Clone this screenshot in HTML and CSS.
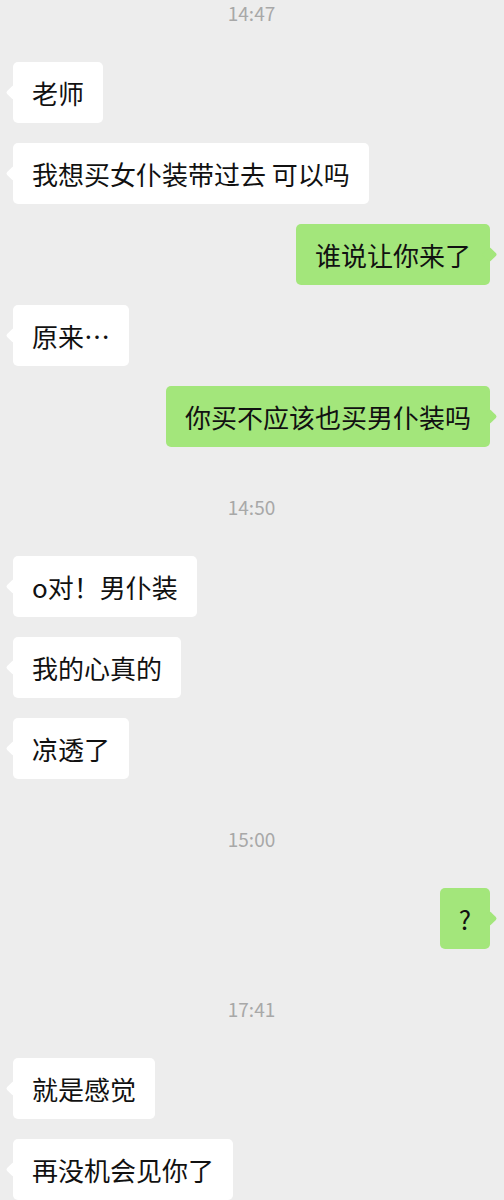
FILE: index.html
```html
<!DOCTYPE html>
<html lang="zh-CN">
<head>
    <meta charset="UTF-8">
    <meta name="viewport" content="width=device-width, initial-scale=1.0">
    <title>聊天记录</title>
    <link rel="stylesheet" href="styles.css">
</head>
<body>
    <div class="chat">
        <div class="time">14:47</div>
        <div class="row left"><p class="bubble">老师</p></div>
        <div class="row left"><p class="bubble">我想买女仆装带过去 可以吗</p></div>
        <div class="row right"><p class="bubble">谁说让你来了</p></div>
        <div class="row left"><p class="bubble">原来…</p></div>
        <div class="row right"><p class="bubble">你买不应该也买男仆装吗</p></div>

        <div class="time">14:50</div>
        <div class="row left"><p class="bubble">o对！男仆装</p></div>
        <div class="row left"><p class="bubble">我的心真的</p></div>
        <div class="row left"><p class="bubble">凉透了</p></div>

        <div class="time">15:00</div>
        <div class="row right"><p class="bubble">?</p></div>

        <div class="time">17:41</div>
        <div class="row left"><p class="bubble">就是感觉</p></div>
        <div class="row left"><p class="bubble">再没机会见你了</p></div>
    </div>
</body>
</html>
```

FILE: styles.css
```css
body {
    margin: 0;
    padding: 0;
    background-color: #ededed;
    font-family: "Noto Sans CJK SC", "Noto Sans", sans-serif;
    overflow: hidden;
}

.chat {
    display: flex;
    flex-direction: column;
    padding: 0 14px 0 13px;
}

.time {
    height: 30px;
    line-height: 30px;
    margin: 45px 0 34px;
    text-align: center;
    font-size: 19px;
    color: #a8a8a8;
}

.time:first-child {
    margin-top: -2px;
}

.row {
    display: flex;
}

.row + .row {
    margin-top: 20px;
}

.row.right {
    justify-content: flex-end;
}

.bubble {
    position: relative;
    margin: 0;
    max-width: 75%;
    padding: 12px 19px;
    line-height: 37px;
    font-size: 26px;
    color: #111;
    background-color: #fff;
    border-radius: 5px;
}

/* little tail pointing at the speaker */
.bubble::before {
    content: "";
    position: absolute;
    top: 50%;
    width: 11px;
    height: 11px;
    margin-top: -5.5px;
    background-color: inherit;
    border-radius: 2px;
    transform: rotate(45deg);
}

.left .bubble::before {
    left: -5px;
}

.right .bubble {
    background-color: #a3e67b;
}

.right .bubble::before {
    right: -5px;
}
```
